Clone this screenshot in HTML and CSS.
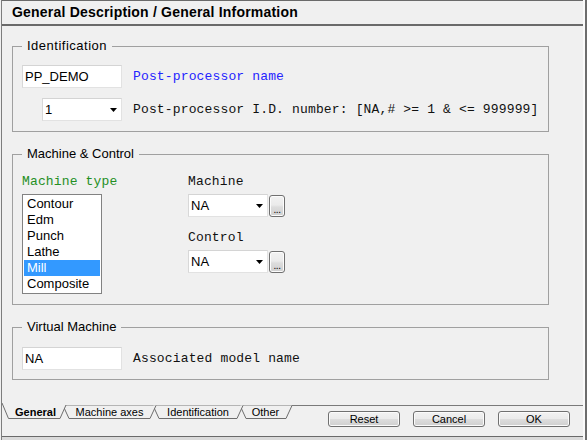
FILE: index.html
```html
<!DOCTYPE html>
<html>
<head>
<meta charset="utf-8">
<title>General Description</title>
<link rel="stylesheet" href="styles.css">
</head>
<body>
<div class="frame">
  <div class="win">
    <div class="header">General Description / General Information</div>
    <div class="content">
      <fieldset class="group g-ident">
        <legend>Identification</legend>
        <div class="row">
          <div class="field w100">PP_DEMO</div>
          <span class="lbl blue">Post-processor name</span>
        </div>
        <div class="row row2">
          <div class="combo w80 indent"><span>1</span><svg class="arrow" width="7" height="4" viewBox="0 0 7 4"><polygon points="0,0 7,0 3.5,4" fill="#000"/></svg></div>
          <span class="lbl">Post-processor I.D. number: [NA,# &gt;= 1 &amp; &lt;= 999999]</span>
        </div>
      </fieldset>

      <fieldset class="group g-mc">
        <legend>Machine &amp; Control</legend>
        <div class="mc">
          <div class="col-type">
            <div class="lbl green cap">Machine type</div>
            <ul class="list">
              <li>Contour</li>
              <li>Edm</li>
              <li>Punch</li>
              <li>Lathe</li>
              <li class="sel">Mill</li>
              <li>Composite</li>
            </ul>
          </div>
          <div class="col-mach">
            <div class="lbl cap">Machine</div>
            <div class="combo-row">
              <div class="combo w80"><span>NA</span><svg class="arrow" width="7" height="4" viewBox="0 0 7 4"><polygon points="0,0 7,0 3.5,4" fill="#000"/></svg></div>
              <div class="dots">...</div>
            </div>
            <div class="lbl cap mt">Control</div>
            <div class="combo-row">
              <div class="combo w80"><span>NA</span><svg class="arrow" width="7" height="4" viewBox="0 0 7 4"><polygon points="0,0 7,0 3.5,4" fill="#000"/></svg></div>
              <div class="dots">...</div>
            </div>
          </div>
        </div>
      </fieldset>

      <fieldset class="group g-vm">
        <legend>Virtual Machine</legend>
        <div class="row">
          <div class="field w100">NA</div>
          <span class="lbl">Associated model name</span>
        </div>
      </fieldset>
    </div>

    <div class="tabrow">
      <svg class="tabs" width="296" height="24" viewBox="2 403 296 24">
        <path d="M62 405.5 H298" stroke="#7a7a7a" stroke-width="1" fill="none"/>
        <path d="M240 405.5 L246 418.5 H286 L292 405.5" fill="#f0f0f0" stroke="#6e6e6e" stroke-width="1"/>
        <path d="M153 405.5 L159 418.5 H237 L243 405.5" fill="#f0f0f0" stroke="#6e6e6e" stroke-width="1"/>
        <path d="M63 405.5 L69 418.5 H150 L156 405.5" fill="#f0f0f0" stroke="#6e6e6e" stroke-width="1"/>
        <path d="M2 403 L8.5 418.5 H60 L66 405" fill="#f0f0f0" stroke="#6e6e6e" stroke-width="1"/>
        <text x="35.5" y="416" text-anchor="middle" class="tab tab-sel">General</text>
        <text x="109.5" y="416" text-anchor="middle" class="tab">Machine axes</text>
        <text x="198" y="416" text-anchor="middle" class="tab">Identification</text>
        <text x="265.5" y="416" text-anchor="middle" class="tab">Other</text>
      </svg>
      <div class="buttons">
        <div class="btn">Reset</div>
        <div class="btn">Cancel</div>
        <div class="btn">OK</div>
      </div>
    </div>
    <div class="spacer"></div>
    <div class="bottomedge"></div>
  </div>
  <div class="gutter"></div>
  <div class="rborder"></div>
</div>
</body>
</html>
```

FILE: styles.css
```css
* { box-sizing: border-box; }
html, body {
  margin: 0;
  padding: 0;
  background: #f0f0f0;
}
body {
  width: 587px;
  height: 440px;
  overflow: hidden;
  font-family: "Liberation Sans", Arial, sans-serif;
  font-size: 13px;
  color: #000;
}
.frame {
  display: flex;
  width: 587px;
  height: 440px;
}
.win {
  width: 582px;
  margin-left: 1px;
  border-left: 1px solid #7d7d7d;
  display: flex;
  flex-direction: column;
}
.gutter {
  width: 2px;
  background: #fafafa;
}
.rborder {
  width: 2px;
  background: #6d6d6d;
}
.header {
  height: 26px;
  border-top: 1px solid #6a6a6a;
  border-bottom: 2px solid #6a6a6a;
  padding-left: 10px;
  font-weight: bold;
  font-size: 14px;
  letter-spacing: 0.2px;
  line-height: 23px;
  white-space: nowrap;
}
.content {
  padding-left: 10px;
  display: flex;
  flex-direction: column;
}
.group {
  margin: 0;
  width: 537px;
  border: 1px solid #a0a0a0;
  padding: 0 9px;
  min-width: 0;
}
.group legend {
  padding: 0 5px;
  font-size: 13px;
  line-height: 16px;
  white-space: nowrap;
}
.g-ident { margin-top: 12px; padding-top: 11px; padding-bottom: 10px; }
.g-ident legend { letter-spacing: 0.5px; }
.g-mc { margin-top: 14px; padding-top: 12px; padding-bottom: 10px; }
.g-vm { margin-top: 14px; padding-top: 12px; padding-bottom: 9px; }

.row {
  display: flex;
  align-items: center;
}
.row2 { margin-top: 10px; }
.indent { margin-left: 20px; }

.field, .combo {
  height: 23px;
  background: #fff;
  border: 1px solid #e2e2e2;
  border-top-color: #d4d4d4;
  border-left-color: #d8d8d8;
  padding-left: 2px;
  line-height: 21px;
  font-size: 13px;
  white-space: nowrap;
}
.w100 { width: 100px; }
.w80 { width: 80px; }
.combo {
  display: flex;
  align-items: center;
  justify-content: space-between;
  padding-right: 4px;
}
.arrow { display: block; margin-top: 1px; }

.lbl {
  font-family: "Liberation Mono", "Courier New", monospace;
  font-size: 13px;
  line-height: 16px;
  letter-spacing: 0.15px;
  color: #111;
  white-space: nowrap;
}
.row .lbl { margin-left: 11px; }
.blue { color: #2424ff; }
.green { color: #248f24; }
.cap { margin-bottom: 4px; }
.mt { margin-top: 13px; }

.mc { display: flex; }
.col-type { width: 166px; }
.col-mach { display: flex; flex-direction: column; }

.list {
  list-style: none;
  margin: 0;
  width: 80px;
  height: 100px;
  padding: 1px;
  background: #fff;
  border: 1px solid #828282;
}
.list li {
  height: 16px;
  line-height: 16px;
  padding-left: 3px;
  font-size: 13px;
}
.list li.sel {
  background: #3399ff;
  color: #fff;
}

.combo-row {
  display: flex;
  align-items: flex-start;
}
.dots {
  width: 16px;
  height: 22px;
  margin-left: 1px;
  margin-top: 1px;
  border: 1px solid #707070;
  border-radius: 3px;
  background: linear-gradient(#f2f2f2 0%, #ebebeb 45%, #dddddd 55%, #cfcfcf 100%);
  box-shadow: inset 0 0 0 1px #fcfcfc;
  font-size: 10px;
  line-height: 10px;
  text-align: center;
  padding-top: 9px;
  letter-spacing: -0.5px;
  color: #000;
}

.tabrow {
  display: flex;
  align-items: flex-start;
  margin-top: 23px;
}
.tabs {
  display: block;
  flex: none;
}
.tab {
  font-family: "Liberation Sans", Arial, sans-serif;
  font-size: 11px;
  fill: #000;
}
.tab-sel { font-weight: bold; }
.buttons {
  flex: 1;
  margin-top: 2px;
  border-top: 1px solid #7a7a7a;
  padding-top: 5px;
  padding-right: 13px;
  display: flex;
  justify-content: flex-end;
  gap: 13px;
}
.btn {
  width: 72px;
  height: 16px;
  border: 1px solid #707070;
  border-radius: 3px;
  background: linear-gradient(#f2f2f2 0%, #ebebeb 48%, #dddddd 52%, #cfcfcf 100%);
  box-shadow: inset 0 0 0 1px #fbfbfb;
  font-size: 11px;
  line-height: 14px;
  text-align: center;
}
.spacer { flex: 1; }
.bottomedge {
  height: 4px;
  border-top: 1px solid #6a6a6a;
  background: #dadada;
}
```
